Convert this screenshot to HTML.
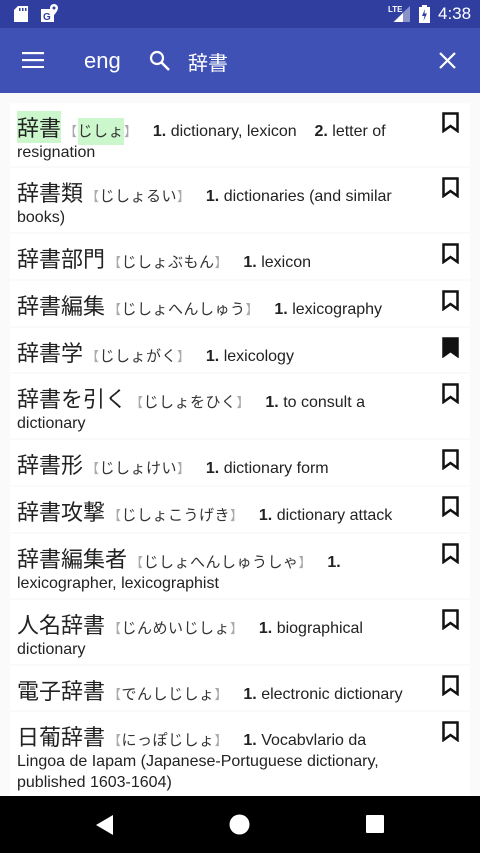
<!DOCTYPE html>
<html><head><meta charset="utf-8"><style>
*{margin:0;padding:0;box-sizing:border-box}
body{width:480px;height:853px;overflow:hidden;background:#fafafa;font-family:"Liberation Sans","Noto Sans CJK JP",sans-serif;position:relative}
.sb{position:absolute;top:0;left:0;width:480px;height:28px;background:#303F9F;color:#fff}
.tb{position:absolute;top:28px;left:0;width:480px;height:65px;background:#3F51B5;color:#fff}
.row{position:absolute;left:10px;width:460px;background:#fff;padding:10px 58px 0 7px;line-height:21px;font-size:16px;color:#222}
.hw{font-size:22px;line-height:28px;color:#222;font-family:"Noto Sans CJK JP",sans-serif}
.rd{font-size:15px;color:#333;font-family:"Noto Sans CJK JP",sans-serif;margin-left:3px;margin-right:2px;letter-spacing:0.5px}
.br{color:#aaa;font-size:13px}
.hl{background:#ccf7cc;padding:2px 0 4px}
.hw.hl{padding:0}
b{font-weight:bold}
.bm{position:absolute;right:11px;top:9px}
.nav{position:absolute;top:796px;left:0;width:480px;height:57px;background:#000}
</style></head><body>
<div class="sb">
<svg style="position:absolute;left:14px;top:6px" width="14" height="16"><path d="M4 0H14V16H0V4Z" fill="#fff"/><rect x="5" y="2" width="1.5" height="3" fill="#303F9F"/><rect x="8" y="2" width="1.5" height="3" fill="#303F9F"/><rect x="11" y="2" width="1.5" height="3" fill="#303F9F"/></svg>
<svg style="position:absolute;left:41px;top:4px" width="18" height="18"><rect x="0" y="5" width="13" height="13" fill="#fff"/><text x="2" y="16" font-size="10" font-weight="bold" fill="#303F9F" font-family="Liberation Sans">G</text><path d="M13 0a4 4 0 0 1 4 4c0 3-4 7-4 7s-4-4-4-7a4 4 0 0 1 4-4z" fill="#fff"/><circle cx="13" cy="4" r="1.5" fill="#303F9F"/></svg>
<div style="position:absolute;left:388px;top:5px;font-size:8px;font-weight:bold">LTE</div>
<svg style="position:absolute;left:393px;top:6px" width="17" height="16"><path d="M17 0V16H0Z" fill="#8a93c9"/><path d="M10 7V16H1Z" fill="#fff"/></svg>
<svg style="position:absolute;left:419px;top:5px" width="11" height="18"><rect x="3" y="0" width="5" height="2" fill="#fff"/><rect x="0" y="2" width="11" height="16" fill="#fff"/><path d="M6 4L3 11H5.5L4.5 16L8 8.5H5.5Z" fill="#303F9F"/></svg>
<div style="position:absolute;left:438px;top:4px;font-size:17px">4:38</div>
</div>
<div class="tb">
<svg style="position:absolute;left:22px;top:24px" width="22" height="16"><rect y="0" width="22" height="2.2" fill="#fff"/><rect y="7" width="22" height="2.2" fill="#fff"/><rect y="14" width="22" height="2.2" fill="#fff"/></svg>
<div style="position:absolute;left:84px;top:20px;font-size:22px">eng</div>
<svg style="position:absolute;left:149px;top:22px" width="22" height="22"><circle cx="8" cy="8" r="6" stroke="#fff" stroke-width="2.2" fill="none"/><path d="M12.5 12.5L20 20" stroke="#fff" stroke-width="2.5"/></svg>
<div style="position:absolute;left:188px;top:19px;font-size:20px;font-family:'Noto Sans CJK JP',sans-serif">辞書</div>
<svg style="position:absolute;left:439px;top:24px" width="17" height="17"><path d="M1 1L16 16M16 1L1 16" stroke="#fff" stroke-width="2.2"/></svg>
</div>

<div class="row" style="top:103px;height:63px"><span class="hw hl">辞書</span><span class="rd"><span class="br">【</span><span class="hl">じしょ</span><span class="br">】</span></span>&nbsp;&nbsp; <b>1.</b> dictionary, lexicon &nbsp;&nbsp; <b>2.</b> letter of resignation<svg class="bm" width="17" height="21"><path d="M1.5 1.5H15.5V19L8.5 14L1.5 19Z" fill="none" stroke="#111" stroke-width="2.5"/></svg></div>
<div class="row" style="top:168px;height:64px"><span class="hw">辞書類</span><span class="rd"><span class="br">【</span>じしょるい<span class="br">】</span></span>&nbsp;&nbsp; <b>1.</b> dictionaries (and similar books)<svg class="bm" width="17" height="21"><path d="M1.5 1.5H15.5V19L8.5 14L1.5 19Z" fill="none" stroke="#111" stroke-width="2.5"/></svg></div>
<div class="row" style="top:234px;height:45px"><span class="hw">辞書部門</span><span class="rd"><span class="br">【</span>じしょぶもん<span class="br">】</span></span>&nbsp;&nbsp; <b>1.</b> lexicon<svg class="bm" width="17" height="21"><path d="M1.5 1.5H15.5V19L8.5 14L1.5 19Z" fill="none" stroke="#111" stroke-width="2.5"/></svg></div>
<div class="row" style="top:281px;height:45px"><span class="hw">辞書編集</span><span class="rd"><span class="br">【</span>じしょへんしゅう<span class="br">】</span></span>&nbsp;&nbsp; <b>1.</b> lexicography<svg class="bm" width="17" height="21"><path d="M1.5 1.5H15.5V19L8.5 14L1.5 19Z" fill="none" stroke="#111" stroke-width="2.5"/></svg></div>
<div class="row" style="top:328px;height:44px"><span class="hw">辞書学</span><span class="rd"><span class="br">【</span>じしょがく<span class="br">】</span></span>&nbsp;&nbsp; <b>1.</b> lexicology<svg class="bm" width="17" height="21"><path d="M1.5 1.5H15.5V19L8.5 14L1.5 19Z" fill="#111" stroke="#111" stroke-width="2.5"/></svg></div>
<div class="row" style="top:374px;height:64px"><span class="hw">辞書を引く</span><span class="rd"><span class="br">【</span>じしょをひく<span class="br">】</span></span>&nbsp;&nbsp; <b>1.</b> to consult a dictionary<svg class="bm" width="17" height="21"><path d="M1.5 1.5H15.5V19L8.5 14L1.5 19Z" fill="none" stroke="#111" stroke-width="2.5"/></svg></div>
<div class="row" style="top:440px;height:45px"><span class="hw">辞書形</span><span class="rd"><span class="br">【</span>じしょけい<span class="br">】</span></span>&nbsp;&nbsp; <b>1.</b> dictionary form<svg class="bm" width="17" height="21"><path d="M1.5 1.5H15.5V19L8.5 14L1.5 19Z" fill="none" stroke="#111" stroke-width="2.5"/></svg></div>
<div class="row" style="top:487px;height:45px"><span class="hw">辞書攻撃</span><span class="rd"><span class="br">【</span>じしょこうげき<span class="br">】</span></span>&nbsp;&nbsp; <b>1.</b> dictionary attack<svg class="bm" width="17" height="21"><path d="M1.5 1.5H15.5V19L8.5 14L1.5 19Z" fill="none" stroke="#111" stroke-width="2.5"/></svg></div>
<div class="row" style="top:534px;height:64px"><span class="hw">辞書編集者</span><span class="rd"><span class="br">【</span>じしょへんしゅうしゃ<span class="br">】</span></span>&nbsp;&nbsp; <b>1.</b> lexicographer, lexicographist<svg class="bm" width="17" height="21"><path d="M1.5 1.5H15.5V19L8.5 14L1.5 19Z" fill="none" stroke="#111" stroke-width="2.5"/></svg></div>
<div class="row" style="top:600px;height:64px"><span class="hw">人名辞書</span><span class="rd"><span class="br">【</span>じんめいじしょ<span class="br">】</span></span>&nbsp;&nbsp; <b>1.</b> biographical dictionary<svg class="bm" width="17" height="21"><path d="M1.5 1.5H15.5V19L8.5 14L1.5 19Z" fill="none" stroke="#111" stroke-width="2.5"/></svg></div>
<div class="row" style="top:666px;height:44px"><span class="hw">電子辞書</span><span class="rd"><span class="br">【</span>でんしじしょ<span class="br">】</span></span>&nbsp;&nbsp; <b>1.</b> electronic dictionary<svg class="bm" width="17" height="21"><path d="M1.5 1.5H15.5V19L8.5 14L1.5 19Z" fill="none" stroke="#111" stroke-width="2.5"/></svg></div>
<div class="row" style="top:712px;height:84px"><span class="hw">日葡辞書</span><span class="rd"><span class="br">【</span>にっぽじしょ<span class="br">】</span></span>&nbsp;&nbsp; <b>1.</b> Vocabvlario da<br>Lingoa de Iapam (Japanese-Portuguese dictionary, published 1603-1604)<svg class="bm" width="17" height="21"><path d="M1.5 1.5H15.5V19L8.5 14L1.5 19Z" fill="none" stroke="#111" stroke-width="2.5"/></svg></div>

<div class="nav">
<svg style="position:absolute;left:96px;top:19px" width="18" height="20"><path d="M17 0V20L0 10Z" fill="#fff"/></svg>
<svg style="position:absolute;left:229px;top:18px" width="21" height="21"><circle cx="10.5" cy="10.5" r="10" fill="#fff"/></svg>
<svg style="position:absolute;left:366px;top:19px" width="18" height="18"><rect width="18" height="18" rx="1" fill="#fff"/></svg>
</div>
</body></html>
